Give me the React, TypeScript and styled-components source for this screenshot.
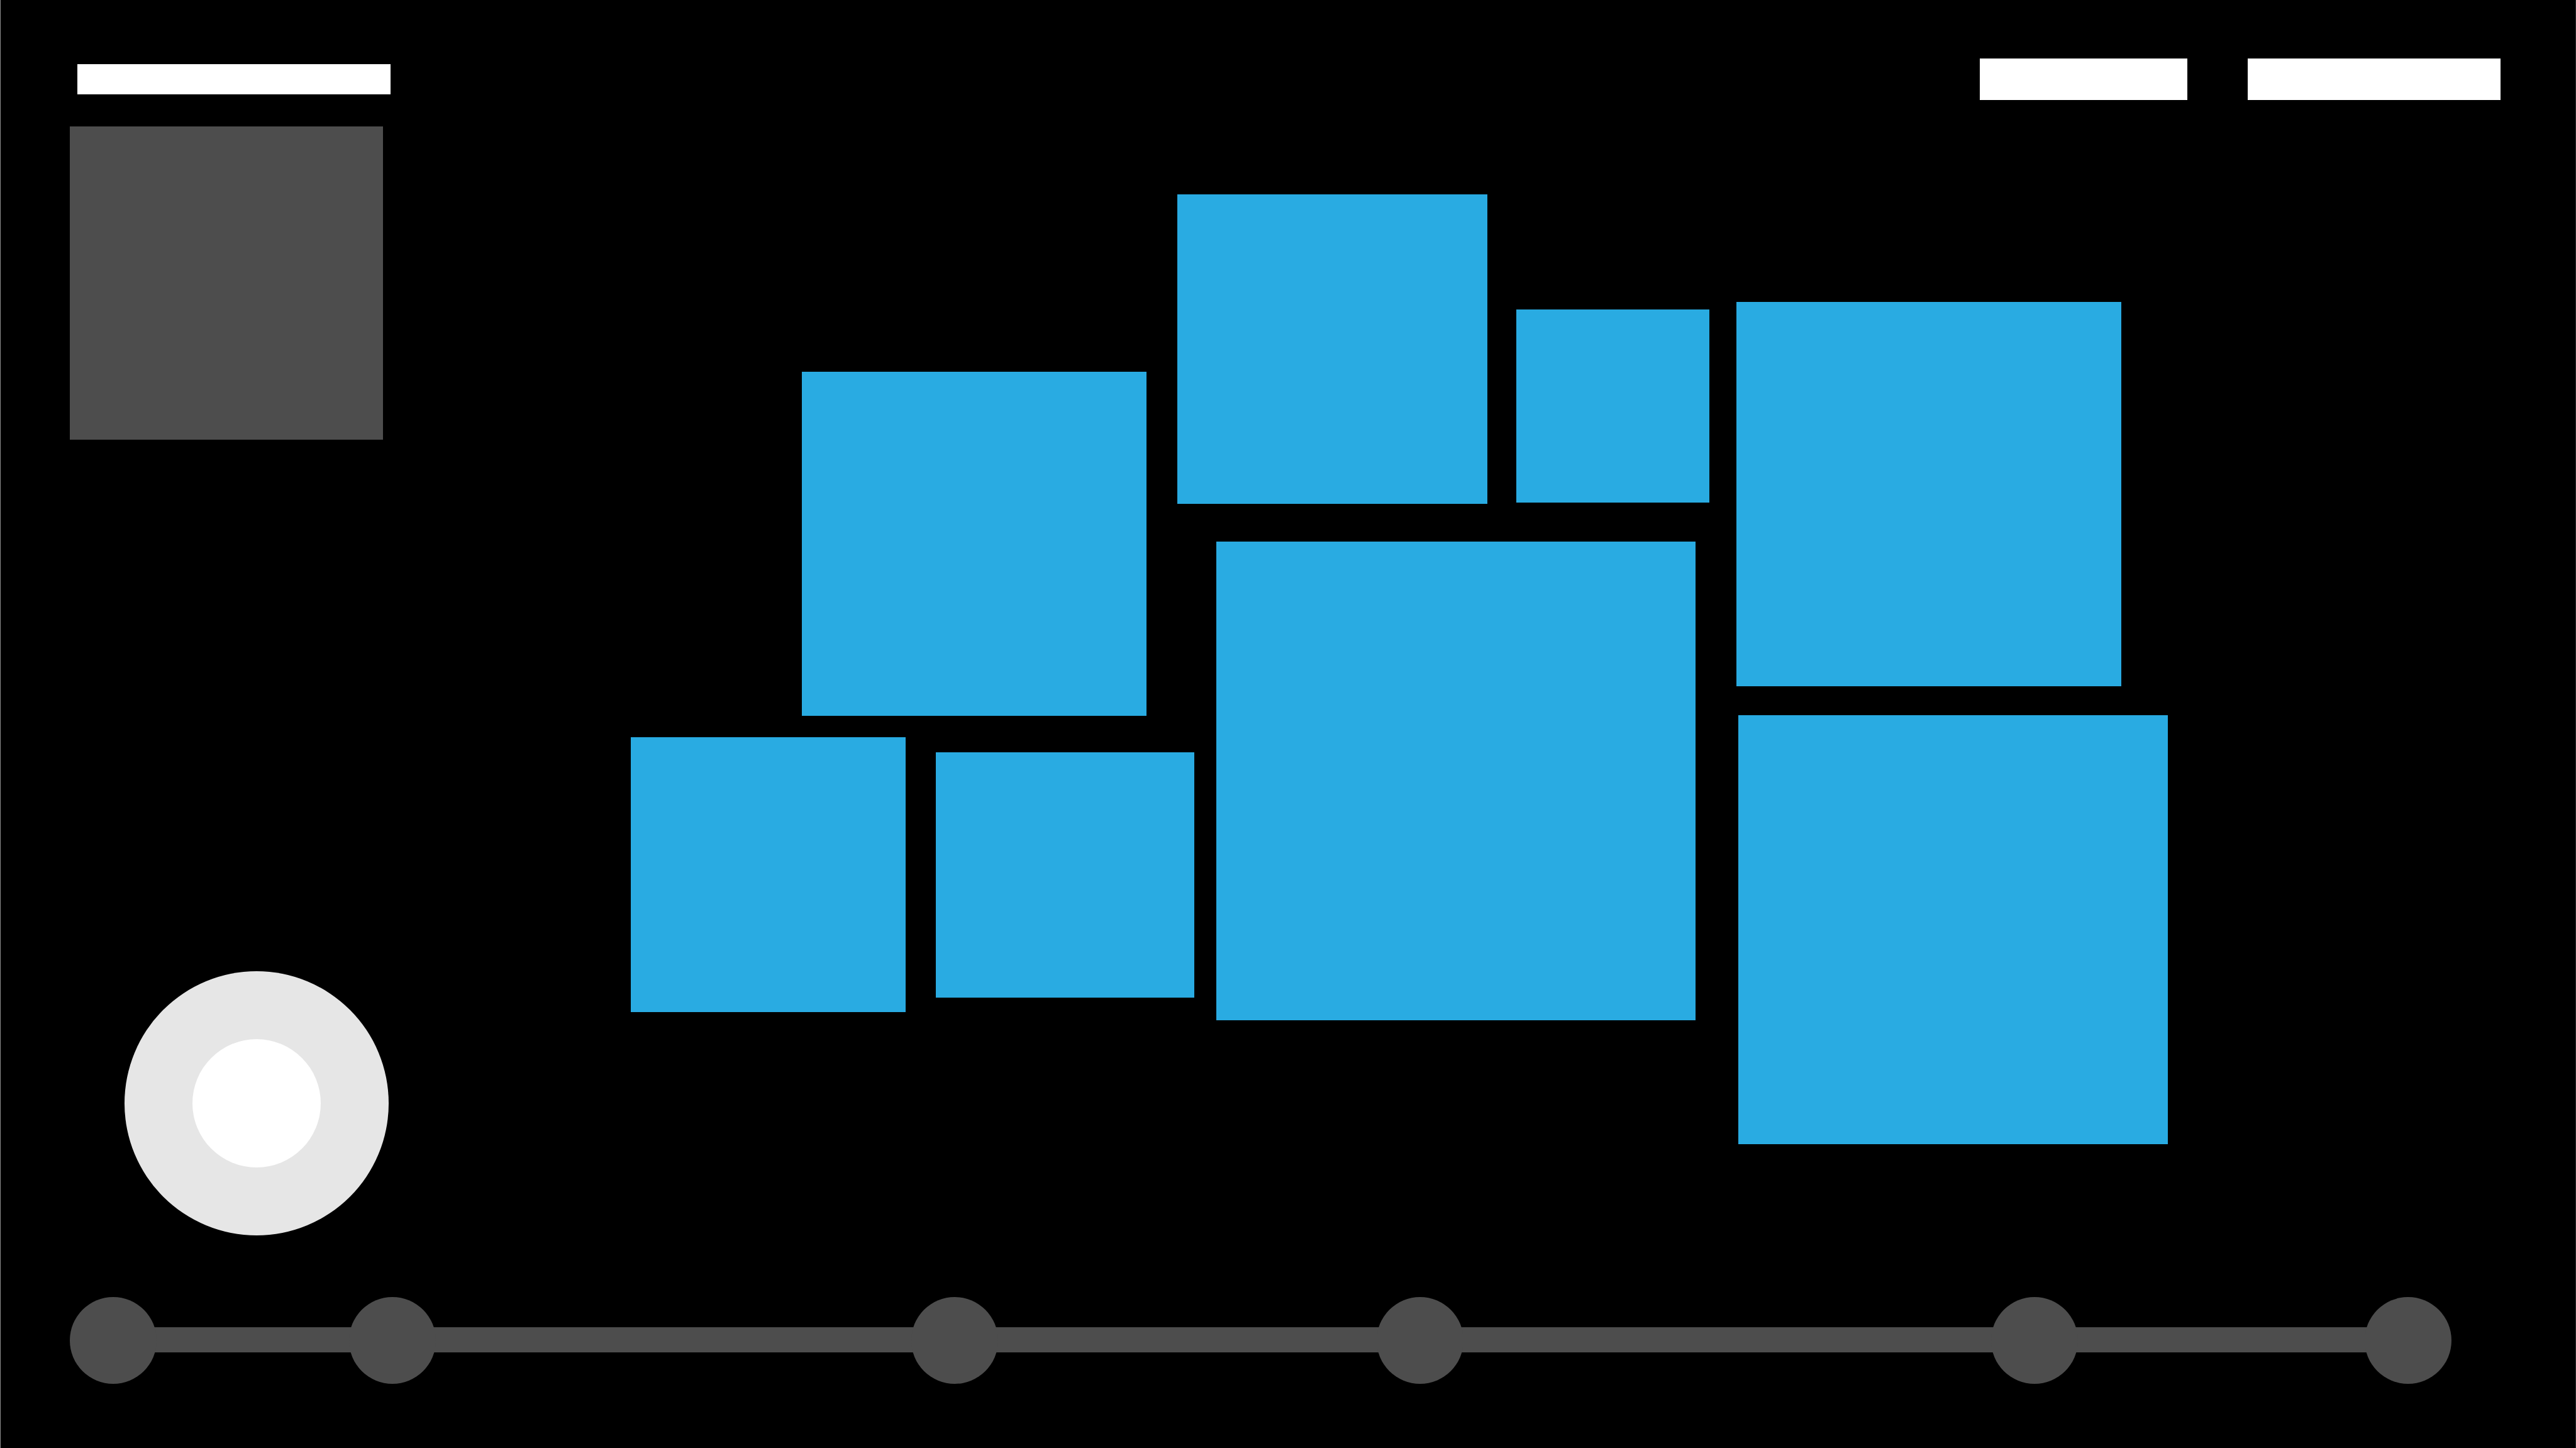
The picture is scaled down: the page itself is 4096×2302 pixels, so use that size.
import React from "react";
import styled, { createGlobalStyle } from "styled-components";

const color = {
  background: "#000000",
  panel: "#4d4d4d",
  tile: "#29abe2",
  bar: "#ffffff",
  ring: "#e6e6e6",
  edgeLeft: "#8f8f8f",
  edgeRight: "#2e2e2e",
};

const GlobalStyle = createGlobalStyle`
  *, *::before, *::after { box-sizing: border-box; }
  body {
    margin: 0;
    background: ${color.background};
    font-family: "Liberation Sans", Arial, sans-serif;
  }
  button { padding: 0; border: 0; cursor: pointer; }
`;

const Screen = styled.div`
  display: flex;
  flex-direction: column;
  min-height: 100vh;
  padding: 93px 0 102px;
  border-left: 1px solid ${color.edgeLeft};
  border-right: 1px solid ${color.edgeRight};
`;

const Header = styled.header`
  display: flex;
  align-items: center;
  justify-content: space-between;
  padding: 0 119px 0 122px;
`;

const TitleBar = styled.div`
  width: 498px;
  height: 48px;
  background: ${color.bar};
`;

const Nav = styled.nav`
  display: flex;
  gap: 96px;
`;

const NavLink = styled.a<{ $width: number }>`
  display: block;
  width: ${(p) => p.$width}px;
  height: 66px;
  background: ${color.bar};
`;

const Main = styled.main`
  display: flex;
  flex: 1;
  padding: 42px 648px 98px 110px;
`;

const Sidebar = styled.aside`
  display: flex;
  flex-direction: column;
  justify-content: space-between;
  flex: none;
  width: 892px;
`;

const Preview = styled.div`
  width: 498px;
  height: 498px;
  background: ${color.panel};
`;

const Dial = styled.button`
  display: grid;
  place-items: center;
  width: 420px;
  height: 420px;
  margin-left: 87px;
  border-radius: 50%;
  background: ${color.ring};
`;

const DialCap = styled.span`
  width: 204px;
  height: 204px;
  border-radius: 50%;
  background: ${color.bar};
`;

/* Every tile names its own start and end lines, so grid-area can refer to it. */
const Mosaic = styled.section`
  display: grid;
  flex: 1;
  align-self: flex-start;
  margin-top: 108px;
  aspect-ratio: 2444 / 1510;
  grid-template-columns:
    [b-start] 272fr [a-start] 165fr [b-end] 48fr [c-start] 335fr
    [a-end] 49fr [d-start] 27fr [c-end] 35fr [f-start] 431fr
    [d-end] 46fr [e-start] 285fr [f-end] 22fr [e-end] 43fr
    [g-start] 3fr [h-start] 609fr [g-end] 74fr [h-end];
  grid-template-rows:
    [d-start] 171fr [g-start] 12fr [e-start] 99fr [a-start] 208fr
    [e-end] 2fr [d-end] 60fr [f-start] 230fr [g-end] 46fr
    [h-start] 1fr [a-end] 34fr [b-start] 24fr [c-start] 390fr
    [c-end] 23fr [b-end] 13fr [f-end] 197fr [h-end];
`;

const Tile = styled.button<{ $area: string }>`
  grid-area: ${(p) => p.$area};
  background: ${color.tile};
`;

const Timeline = styled.ol`
  position: relative;
  display: flex;
  margin: 0 197px 0 110px;
  padding: 0;
  list-style: none;

  &::before {
    content: "";
    position: absolute;
    top: 48px;
    left: 69px;
    right: 69px;
    height: 40px;
    background: ${color.panel};
  }
`;

const Stop = styled.li<{ $span: number }>`
  position: relative;
  display: flex;
  flex: ${(p) => p.$span} 0 138px;
`;

const StopButton = styled.button`
  width: 138px;
  height: 138px;
  border-radius: 50%;
  background: ${color.panel};
`;

const tiles = ["a", "b", "c", "d", "e", "f", "g", "h"];

/* Distance from each stop to the next one. */
const stops = [306, 756, 602, 839, 456, 0];

export default function App() {
  return (
    <>
      <GlobalStyle />
      <Screen>
        <Header>
          <TitleBar />
          <Nav>
            <NavLink href="#first" $width={330} aria-label="First section" />
            <NavLink href="#second" $width={402} aria-label="Second section" />
          </Nav>
        </Header>
        <Main>
          <Sidebar>
            <Preview />
            <Dial type="button" aria-label="Dial">
              <DialCap />
            </Dial>
          </Sidebar>
          <Mosaic>
            {tiles.map((area) => (
              <Tile key={area} type="button" $area={area} aria-label={`Tile ${area}`} />
            ))}
          </Mosaic>
        </Main>
        <Timeline>
          {stops.map((span, index) => (
            <Stop key={index} $span={span}>
              <StopButton type="button" aria-label={`Stop ${index + 1}`} />
            </Stop>
          ))}
        </Timeline>
      </Screen>
    </>
  );
}
